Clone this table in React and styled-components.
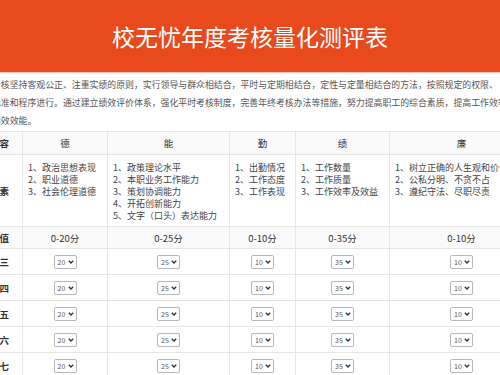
import React from 'react';
import styled, { createGlobalStyle } from 'styled-components';

const GlobalStyle = createGlobalStyle`
    html, body {
        margin: 0;
        padding: 0;
        background: #fff;
        overflow: hidden;
    }

    body {
        font-family: "Noto Sans CJK SC", "Noto Sans", sans-serif;
        color: #444;
    }
`;

const TopBar = styled.header`
    height: 72px;
    background: #e8491d;
    border-bottom: 1px solid #f6c4b1;

    display: flex;
    align-items: center;
    justify-content: center;
`;

const Title = styled.h1`
    margin: 0;
    font-size: 23px;
    font-weight: 400;
    color: #fff;
`;

// the screenshot is cropped: the sheet runs past both edges of the window
const Sheet = styled.main`
    width: 560px;
    margin-left: -24px;
    padding-top: 3px;
`;

const Intro = styled.div`
    padding-left: 16px;
    margin-bottom: 1px;

    font-size: 8.9px;
    line-height: 18px;
    color: #555;
    white-space: nowrap;
`;

const IntroLine = styled.span`
    display: block;
`;

const Grid = styled.table`
    width: 557px;
    border-collapse: collapse;
    table-layout: fixed;

    font-size: 9px;
    color: #444;
`;

const Row = styled.tr`
    height: ${props => props.$height}px;
    background: ${props => (props.$shaded ? '#fafafa' : '#fff')};
`;

const Cell = styled.td`
    border: 1px solid #e6e6e6;
    padding: ${props => (props.$list ? '7px 5px 0' : '0 4px')};
    box-sizing: border-box;

    text-align: ${props => (props.$list ? 'left' : 'center')};
    vertical-align: ${props => (props.$list ? 'top' : 'middle')};
    white-space: nowrap;
    overflow: hidden;
`;

const HeadCell = styled(Cell)`
    font-size: 9.5px;
    color: #333;
`;

const Label = styled(Cell)`
    font-size: 9.5px;
    font-weight: 700;
    color: #333;
`;

const Item = styled.div`
    line-height: 12px;
`;

const Picker = styled.span`
    display: inline-flex;
    align-items: center;
    justify-content: space-between;
    width: 23px;
    height: 14px;
    padding: 0 2px 0 3px;
    box-sizing: border-box;
    vertical-align: middle;

    border: 1px solid #b8b8b8;
    border-radius: 2px;
    background: #fff;
    box-shadow: 0 0 1px rgba(0, 0, 0, 0.08);

    font-size: 7px;
    color: #555;
`;

const Chevron = () => (
    <svg width="6" height="4" viewBox="0 0 6 4">
        <path d="M0.8 0.8 L3 3 L5.2 0.8" fill="none" stroke="#333" strokeWidth="1.4" />
    </svg>
);

const columns = [
    { name: '德', width: 85, score: '0-20分', max: 20, items: ['1、政治思想表现', '2、职业道德', '3、社会伦理道德'] },
    { name: '能', width: 122, score: '0-25分', max: 25, items: ['1、政策理论水平', '2、本职业务工作能力', '3、策划协调能力', '4、开拓创新能力', '5、文字（口头）表达能力'] },
    { name: '勤', width: 66, score: '0-10分', max: 10, items: ['1、出勤情况', '2、工作态度', '3、工作表现'] },
    { name: '绩', width: 94, score: '0-35分', max: 35, items: ['1、工作数量', '2、工作质量', '3、工作效率及效益'] },
    { name: '廉', width: 144, score: '0-10分', max: 10, items: ['1、树立正确的人生观和价值观', '2、公私分明、不贪不占', '3、遵纪守法、尽职尽责'] }
];

const people = ['张三', '李四', '王五', '赵六', '钱七'];

const App = () => (
    <>
        <GlobalStyle />
        <TopBar>
            <Title>校无忧年度考核量化测评表</Title>
        </TopBar>
        <Sheet>
            <Intro>
                <IntroLine>考核坚持客观公正、注重实绩的原则，实行领导与群众相结合，平时与定期相结合，定性与定量相结合的方法，按照规定的权限、</IntroLine>
                <IntroLine>标准和程序进行。通过建立绩效评价体系，强化平时考核制度，完善年终考核办法等措施，努力提高职工的综合素质，提高工作效率和</IntroLine>
                <IntroLine>绩效效能。</IntroLine>
            </Intro>
            <Grid>
                <colgroup>
                    <col style={{ width: 46 }} />
                    {columns.map(col => (
                        <col key={col.name} style={{ width: col.width }} />
                    ))}
                </colgroup>
                <tbody>
                    <Row $height={23} $shaded>
                        <Label>内容</Label>
                        {columns.map(col => (
                            <HeadCell key={col.name}>{col.name}</HeadCell>
                        ))}
                    </Row>
                    <Row $height={72}>
                        <Label>要素</Label>
                        {columns.map(col => (
                            <Cell key={col.name} $list>
                                {col.items.map(item => (
                                    <Item key={item}>{item}</Item>
                                ))}
                            </Cell>
                        ))}
                    </Row>
                    <Row $height={22} $shaded>
                        <Label>分值</Label>
                        {columns.map(col => (
                            <HeadCell key={col.name}>{col.score}</HeadCell>
                        ))}
                    </Row>
                    {people.map(person => (
                        <Row key={person} $height={26}>
                            <Label>{person}</Label>
                            {columns.map(col => (
                                <Cell key={col.name}>
                                    <Picker>
                                        {col.max}
                                        <Chevron />
                                    </Picker>
                                </Cell>
                            ))}
                        </Row>
                    ))}
                </tbody>
            </Grid>
        </Sheet>
    </>
);

export default App;
